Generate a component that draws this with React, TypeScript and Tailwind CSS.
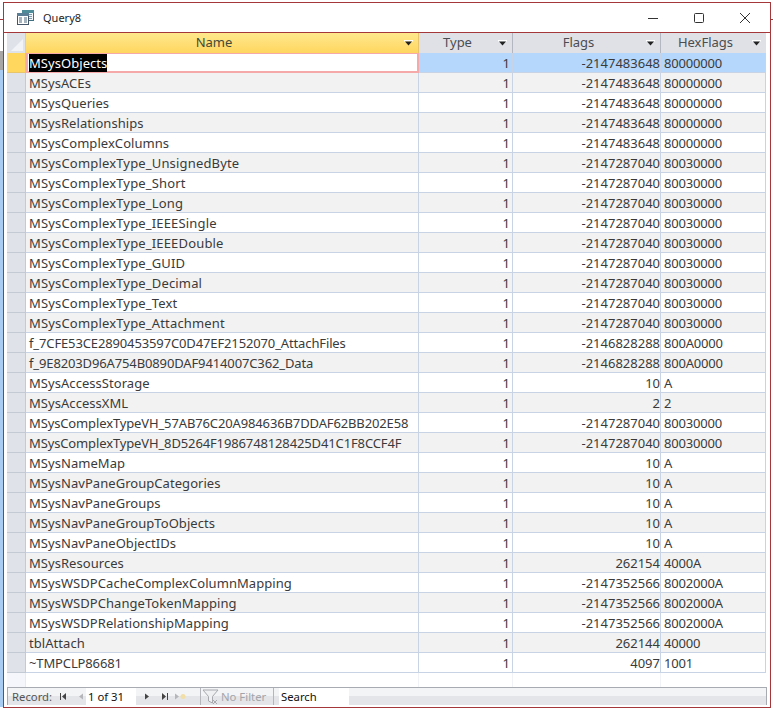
const ROWS: [string, string, string][] = [
  ["MSysObjects", "-2147483648", "80000000"],
  ["MSysACEs", "-2147483648", "80000000"],
  ["MSysQueries", "-2147483648", "80000000"],
  ["MSysRelationships", "-2147483648", "80000000"],
  ["MSysComplexColumns", "-2147483648", "80000000"],
  ["MSysComplexType_UnsignedByte", "-2147287040", "80030000"],
  ["MSysComplexType_Short", "-2147287040", "80030000"],
  ["MSysComplexType_Long", "-2147287040", "80030000"],
  ["MSysComplexType_IEEESingle", "-2147287040", "80030000"],
  ["MSysComplexType_IEEEDouble", "-2147287040", "80030000"],
  ["MSysComplexType_GUID", "-2147287040", "80030000"],
  ["MSysComplexType_Decimal", "-2147287040", "80030000"],
  ["MSysComplexType_Text", "-2147287040", "80030000"],
  ["MSysComplexType_Attachment", "-2147287040", "80030000"],
  ["f_7CFE53CE2890453597C0D47EF2152070_AttachFiles", "-2146828288", "800A0000"],
  ["f_9E8203D96A754B0890DAF9414007C362_Data", "-2146828288", "800A0000"],
  ["MSysAccessStorage", "10", "A"],
  ["MSysAccessXML", "2", "2"],
  ["MSysComplexTypeVH_57AB76C20A984636B7DDAF62BB202E58", "-2147287040", "80030000"],
  ["MSysComplexTypeVH_8D5264F1986748128425D41C1F8CCF4F", "-2147287040", "80030000"],
  ["MSysNameMap", "10", "A"],
  ["MSysNavPaneGroupCategories", "10", "A"],
  ["MSysNavPaneGroups", "10", "A"],
  ["MSysNavPaneGroupToObjects", "10", "A"],
  ["MSysNavPaneObjectIDs", "10", "A"],
  ["MSysResources", "262154", "4000A"],
  ["MSysWSDPCacheComplexColumnMapping", "-2147352566", "8002000A"],
  ["MSysWSDPChangeTokenMapping", "-2147352566", "8002000A"],
  ["MSysWSDPRelationshipMapping", "-2147352566", "8002000A"],
  ["tblAttach", "262144", "40000"],
  ["~TMPCLP86681", "4097", "1001"],
];

const COLS = "grid grid-cols-[19px_393px_94px_148px_105px]";

// hex-heavy names run narrower than the rest in the original font
function nameTracking(name: string) {
  if (/[0-9A-F]{8}/.test(name) || name.startsWith("~")) return "tracking-[-0.13px]";
  if (name.startsWith("MSysComplexType_")) return "tracking-[0.17px]";
  return "tracking-[0.05px]";
}

function SortArrow() {
  return (
    <svg width="9" height="6" viewBox="0 0 9 6" className="shrink-0">
      <path d="M0 0h9v1.5H0z" fill="#fff" />
      <path d="M1 1.5h7L4.5 5.5z" fill="#222" />
    </svg>
  );
}

function HeaderCell({ label, active, last }: { label: string; active?: boolean; last?: boolean }) {
  return (
    <div
      className={`flex items-center pr-[5px] border-r ${
        active
          ? "bg-gradient-to-b from-[#fee88c] to-[#ffd65e] border-[#e8c56a] text-[#3e4a3c]"
          : "bg-[#dfe1e7] border-[#b4b7bf] text-[#4a4d52]"
      } ${last ? "border-r-0" : ""}`}
    >
      <span className="flex-1 text-center mt-[-2px] pr-[2px]">{label}</span>
      <SortArrow />
    </div>
  );
}

function TableIcon() {
  return (
    <svg width="17" height="15" viewBox="0 0 17 15">
      <rect x="5.5" y="0.5" width="11" height="10" fill="#f4f7f9" stroke="#3d6f80" />
      <rect x="5" y="0" width="12" height="3" fill="#4f8c9a" />
      <path d="M9 4.5h6M9 6.5h6M9 8.5h6" stroke="#7f9cab" />
      <rect x="0.5" y="3.5" width="11" height="11" fill="#fff" stroke="#44566a" />
      <rect x="0" y="3" width="12" height="3" fill="#5a7f96" />
      <path d="M2 8h3M7 8h3M2 10h3M7 10h3M2 12h3M7 12h3" stroke="#4d6880" />
    </svg>
  );
}

function WindowControls() {
  return (
    <div className="flex items-center gap-[36px] pr-[20px]">
      <svg width="10" height="10" viewBox="0 0 10 10">
        <path d="M0 5.5h10" stroke="#333" />
      </svg>
      <svg width="10" height="10" viewBox="0 0 10 10">
        <rect x="0.5" y="0.5" width="9" height="9" rx="1" fill="none" stroke="#333" />
      </svg>
      <svg width="10" height="10" viewBox="0 0 10 10">
        <path d="M0 0l10 10M10 0L0 10" stroke="#333" />
      </svg>
    </div>
  );
}

function NavIcon({ d, color = "#444" }: { d: string; color?: string }) {
  return (
    <svg width="8" height="9" viewBox="0 0 8 9" className="shrink-0">
      <path d={d} fill={color} />
    </svg>
  );
}

function NavBar() {
  return (
    <div className="w-[760px] h-[18px] flex items-stretch border-t border-x border-[#a9abb3] bg-gradient-to-b from-[#f3f4f6] from-50% to-[#e4e5e8] to-50% text-[11.3px] leading-[18px] text-[#555]">
      <span className="ml-[4px] w-[47px]">Record:</span>
      <div className="flex items-center w-[27px] gap-[10px]">
        <NavIcon d="M1 1h1v7H1zM7 1v7L3 4.5z" />
        <NavIcon d="M6 1.5v6L2 4.5z" color="#b4b6ba" />
      </div>
      <div className="w-[50px] bg-white text-[#111] pl-[2px]">1 of 31</div>
      <div className="flex items-center ml-[7px] w-[58px] gap-[10px]">
        <NavIcon d="M2 1.5v6l4-3z" />
        <NavIcon d="M1 1v7l4-3.5zM6 1h1v7H6z" />
        <svg width="12" height="9" viewBox="0 0 12 9" className="shrink-0 ml-[-5px]">
          <path d="M1 1.5v6l4-3z" fill="#b4b6ba" />
          <circle cx="9" cy="4.5" r="2.5" fill="#f2dfa8" />
        </svg>
      </div>
      <div className="w-[74px] flex items-center border-l border-r border-[#b4b6bc] text-[#a3a5aa] ml-[-1px]">
        <svg width="18" height="16" viewBox="0 0 18 16" className="shrink-0 ml-[1px]">
          <path d="M1 1h15l-5.5 6.5V14l-4-2V7.5z" fill="#eef0f2" stroke="#a7a9ae" />
          <path d="M11 11l4 4M15 11l-4 4" stroke="#a7a9ae" />
        </svg>
        <span className="ml-[1px] whitespace-nowrap">No Filter</span>
      </div>
      <div className="w-[70px] ml-[5px] bg-white text-[#111] pl-[2px]">Search</div>
    </div>
  );
}

export default function App() {
  return (
    <div
      className="w-[773px] h-[710px] flex bg-white overflow-hidden text-[13px] leading-[19px] text-[#3a3a3a]"
      style={{ fontFamily: '"Noto Sans", "Open Sans", sans-serif' }}
    >
      <div className="w-[3px] flex flex-col shrink-0">
        <div className="h-[19px]" />
        <div className="h-px bg-[#a4373a]" />
        <div className="h-[31px]" />
        <div className="h-[19px] bg-[#a9a7a5]" />
        <div className="h-[637px] bg-[#a9cdf2]" />
      </div>

      <div className="w-[768px] h-[706px] mt-[2px] border border-[#a4373a] flex flex-col shrink-0 bg-white">
        <div className="h-[30px] flex items-center justify-between border-b border-[#a4373a] shrink-0">
          <div className="flex items-center pl-[13px] gap-[9px]">
            <TableIcon />
            <span className="text-[#222] text-[11px]">Query8</span>
          </div>
          <WindowControls />
        </div>

        <div className="pl-[3px] flex flex-col flex-1">
          <div className={`${COLS} h-[20px] text-center`}>
            <div className="bg-[#dfe3e9] border-r border-[#c9ced6] relative overflow-hidden">
              <div className="absolute right-[2px] bottom-[2px] w-0 h-0 border-l-[12px] border-l-transparent border-b-[12px] border-b-[#f1f3f6]" />
            </div>
            <HeaderCell label="Name" active />
            <HeaderCell label="Type" />
            <HeaderCell label="Flags" />
            <HeaderCell label="HexFlags" last />
          </div>

          {ROWS.map((r, i) => {
            const current = i === 0;
            const shade = i % 2 === 1 ? "bg-[#f2f2f2]" : "bg-white";
            const cell = `h-[20px] pt-px border-b border-r border-[#c8d4e6] whitespace-nowrap overflow-hidden ${
              current ? "bg-[#b5d7fc] border-[#b5d7fc]" : shade
            }`;
            return (
              <div key={r[0]} className={COLS}>
                <div
                  className={`h-[20px] border-b border-r ${
                    current ? "bg-[#ffd65e] border-[#e8c56a]" : "bg-[#dfe3e9] border-[#c4cad3]"
                  }`}
                />
                {current ? (
                  <div className="h-[20px] border-2 border-t border-[#f6a9a9] bg-white pl-[1px] whitespace-nowrap">
                    <span className={`bg-black text-white ${nameTracking(r[0])}`}>{r[0]}</span>
                  </div>
                ) : (
                  <div className={`${cell} pl-[3px] ${nameTracking(r[0])}`}>{r[0]}</div>
                )}
                <div className={`${cell} text-right pr-[2px]`}>1</div>
                <div className={`${cell} text-right`}>{r[1]}</div>
                <div className={`${cell} pl-[3px] tracking-[-0.2px]`}>{r[2]}</div>
              </div>
            );
          })}

          <div className={`${COLS} h-[14px]`}>
            <div className="bg-[#f4f6fb] border-r border-[#e6eaf2]" />
            <div className="border-r border-[#f0f2f7]" />
            <div className="border-r border-[#f0f2f7]" />
            <div className="border-r border-[#f0f2f7]" />
            <div />
          </div>
          <NavBar />
        </div>
      </div>

      <div className="w-[2px] flex flex-col shrink-0">
        <div className="h-[19px]" />
        <div className="h-px bg-[#a4373a]" />
      </div>
    </div>
  );
}
